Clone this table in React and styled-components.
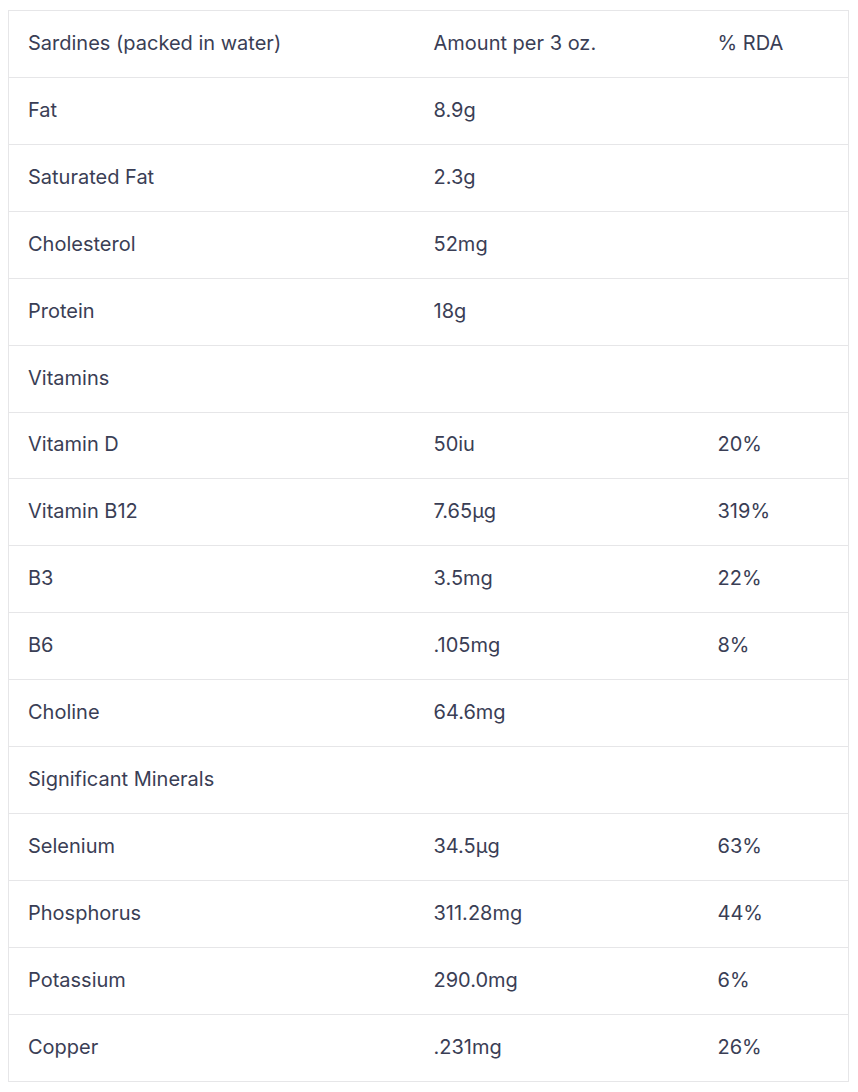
import React from "react";
import styled, { createGlobalStyle } from "styled-components";

const GlobalStyle = createGlobalStyle`
  body {
    margin: 0;
    background: #ffffff;
    font-family: Inter, "Noto Sans", sans-serif;
  }
`;

const rows = [
  ["Fat", "8.9g", ""],
  ["Saturated Fat", "2.3g", ""],
  ["Cholesterol", "52mg", ""],
  ["Protein", "18g", ""],
  ["Vitamins", "", ""],
  ["Vitamin D", "50iu", "20%"],
  ["Vitamin B12", "7.65μg", "319%"],
  ["B3", "3.5mg", "22%"],
  ["B6", ".105mg", "8%"],
  ["Choline", "64.6mg", ""],
  ["Significant Minerals", "", ""],
  ["Selenium", "34.5μg", "63%"],
  ["Phosphorus", "311.28mg", "44%"],
  ["Potassium", "290.0mg", "6%"],
  ["Copper", ".231mg", "26%"],
];

function App() {
  return (
    <Page>
      <GlobalStyle />
      <Table>
        <colgroup>
          <col style={{ width: 406 }} />
          <col style={{ width: 284 }} />
          <col />
        </colgroup>
        <thead>
          <Row>
            <Cell as="th">Sardines (packed in water)</Cell>
            <Cell as="th">Amount per 3 oz.</Cell>
            <Cell as="th">% RDA</Cell>
          </Row>
        </thead>
        <tbody>
          {rows.map(([name, amount, rda]) => (
            <Row key={name}>
              <Cell>{name}</Cell>
              <Cell>{amount}</Cell>
              <Cell>{rda}</Cell>
            </Row>
          ))}
        </tbody>
      </Table>
    </Page>
  );
}

const Page = styled.div`
  padding: 10px 8px;
`;

const Table = styled.table`
  width: 841px;
  border-collapse: collapse;
  table-layout: fixed;
  border: 1px solid #e6e6e8;
`;

const Row = styled.tr`
  height: 66.93px;
  border-bottom: 1px solid #e6e6e8;
`;

const Cell = styled.td`
  padding: 0 19px 2px;
  text-align: left;
  vertical-align: middle;
  font-weight: 400;
  font-size: 20px;
  color: #3a3e55;
  white-space: nowrap;
`;

export default App;
